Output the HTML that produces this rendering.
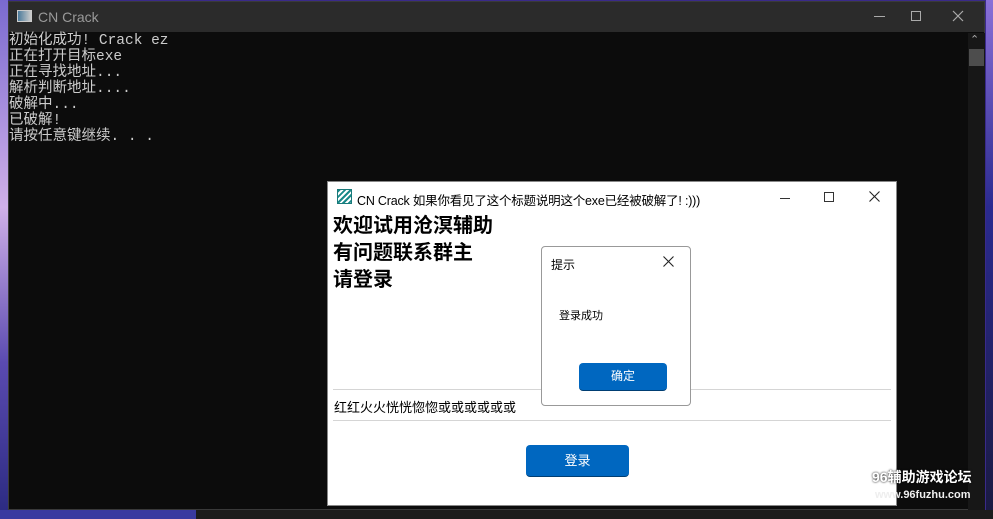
<!DOCTYPE html>
<html><head><meta charset="utf-8"><style>
*{margin:0;padding:0;box-sizing:border-box}
body{width:993px;height:519px;overflow:hidden;background:#3a2a8a;position:relative;font-family:"Liberation Sans","Noto Sans CJK SC",sans-serif}
.a{position:absolute}
.con{left:8px;top:1px;width:977px;height:509px;background:#0c0c0c;border:1px solid #3a3a3a}
.ct{left:0;top:0;width:100%;height:30px;background:#2b2b2b;color:#9a9a9a;font-size:14px}
.txt{left:0;top:31px;color:#cccccc;font-family:"Liberation Mono","Noto Sans CJK SC",monospace;font-size:14.5px;line-height:16px;white-space:pre}
.dlg{left:327px;top:181px;width:570px;height:325px;background:#fff;border:1px solid #888}
.btn{background:#0067c0;color:#fff;font-size:13px;text-align:center;border-radius:4px;border-bottom:1px solid #003e73}
</style></head><body>
<div class="a" style="left:0;top:0;width:8px;height:519px;background:linear-gradient(#7a6ad0,#d0b0e8 40%,#5a4ab0 70%,#2a2a80)"></div>
<div class="a" style="left:986px;top:0;width:7px;height:519px;background:linear-gradient(#8a70d8,#2a2a90 40%,#1a1a40)"></div>
<div class="a" style="left:0;top:510px;width:196px;height:9px;background:#3a3aa0"></div>
<div class="a" style="left:196px;top:510px;width:797px;height:9px;background:#1c1c1c"></div>
<div class="a con">
 <div class="a ct">
  <div class="a" style="left:8px;top:8px;width:15px;height:12px;border:1px solid #ccc;background:linear-gradient(90deg,#4a7a9a,#ccc)"></div>
  <div class="a" style="left:29px;top:7px">CN Crack</div>
  <div class="a" style="left:865px;top:14px;width:11px;height:1px;background:#aaa"></div>
  <div class="a" style="left:902px;top:9px;width:10px;height:10px;border:1px solid #aaa"></div>
  <svg class="a" style="left:943px;top:8px" width="12" height="12"><path d="M1 1L11 11M11 1L1 11" stroke="#aaa" stroke-width="1.2"/></svg>
 </div>
 <div class="a txt">初始化成功! Crack ez
正在打开目标exe
正在寻找地址...
解析判断地址....
破解中...
已破解!
请按任意键继续. . .</div>
 <div class="a" style="left:959px;top:31px;width:17px;height:477px;background:#171717"></div>
 <div class="a" style="left:961px;top:31px;color:#aaa;font-size:11px">⌃</div>
 <div class="a" style="left:960px;top:47px;width:15px;height:17px;background:#4d4d4d"></div>
</div>
<div class="a dlg">
 <div class="a" style="left:9px;top:7px;width:15px;height:15px;background:repeating-linear-gradient(135deg,#1a8a8a 0 2px,#fff 2px 4px);border:1px solid #1a7a7a"></div>
 <div class="a" style="left:29px;top:8px;font-size:12.5px;color:#000;letter-spacing:-0.2px">CN Crack 如果你看见了这个标题说明这个exe已经被破解了! :)))</div>
 <div class="a" style="left:452px;top:16px;width:10px;height:1px;background:#333"></div>
 <div class="a" style="left:496px;top:10px;width:10px;height:10px;border:1px solid #333"></div>
 <svg class="a" style="left:541px;top:9px" width="11" height="11"><path d="M0.5 0.5L10.5 10.5M10.5 0.5L0.5 10.5" stroke="#222" stroke-width="1.1"/></svg>
 <div class="a" style="left:5px;top:31px;font-size:20px;font-weight:bold;line-height:27px;color:#000">欢迎试用沧溟辅助<br>有问题联系群主<br>请登录</div>
 <div class="a" style="left:5px;top:207px;width:558px;height:32px;border-top:1px solid #d5d5d5;border-bottom:1px solid #d5d5d5"></div>
 <div class="a" style="left:6px;top:215px;font-size:13px;color:#000">红红火火恍恍惚惚或或或或或或</div>
 <div class="a btn" style="left:198px;top:263px;width:103px;height:32px;line-height:32px">登录</div>
</div>
<div class="a" style="left:541px;top:246px;width:150px;height:160px;background:#fff;border:1px solid #999;border-radius:4px">
 <div class="a" style="left:9px;top:9px;font-size:12px;color:#000">提示</div>
 <svg class="a" style="left:121px;top:9px" width="11" height="11"><path d="M0.5 0.5L10.5 10.5M10.5 0.5L0.5 10.5" stroke="#222" stroke-width="1.1"/></svg>
 <div class="a" style="left:17px;top:60px;font-size:11px;color:#000">登录成功</div>
 <div class="a btn" style="left:37px;top:116px;width:88px;height:28px;line-height:27px;font-size:12px">确定</div>
</div>
<div class="a" style="left:872px;top:467px;color:#fff;font-weight:bold;font-size:14px;text-shadow:0 0 2px #000">96辅助游戏论坛</div>
<div class="a" style="left:875px;top:489px;color:#eee;font-weight:bold;font-size:11px">www.96fuzhu.com</div>
</body></html>
